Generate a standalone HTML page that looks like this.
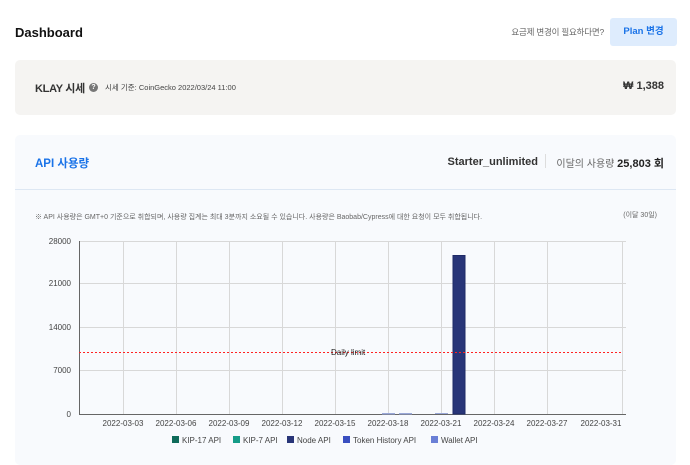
<!DOCTYPE html>
<html><head><meta charset="utf-8"><style>
*{margin:0;padding:0;box-sizing:border-box}
body{width:690px;height:457px;background:#fff;font-family:"Liberation Sans","Noto Sans CJK KR",sans-serif;position:relative;overflow:hidden;color:#222}
.a{position:absolute;white-space:nowrap}
.r{position:absolute;white-space:nowrap;text-align:right}
</style></head><body>
<div class="a" style="left:15px;top:25px;font-size:13px;font-weight:bold;color:#111">Dashboard</div>
<div class="r" style="right:86px;top:26px;font-size:8.5px;color:#666;letter-spacing:-0.2px">요금제 변경이 필요하다면?</div>
<div class="a" style="left:610px;top:18px;width:67px;height:28px;background:#deecfd;border-radius:3px;color:#1a73e8;font-size:9.5px;font-weight:bold;text-align:center;line-height:28px">Plan 변경</div>

<div class="a" style="left:15px;top:60px;width:661px;height:55px;background:#f5f4f2;border-radius:5px"></div>
<div class="a" style="left:35px;top:80px;font-size:11px;font-weight:bold;color:#333;letter-spacing:-0.3px">KLAY 시세</div>
<div class="a" style="left:89px;top:83px;width:9px;height:9px;border-radius:50%;background:#777;color:#fff;font-size:7px;text-align:center;line-height:9px;font-weight:bold">?</div>
<div class="a" style="left:105px;top:82px;font-size:7.5px;color:#444">시세 기준: CoinGecko 2022/03/24 11:00</div>
<div class="r" style="right:26px;top:80px;font-size:11px;font-weight:bold;color:#333">₩ 1,388</div>

<div class="a" style="left:15px;top:135px;width:661px;height:330px;background:#f8fafd;border-radius:5px"></div>
<div class="a" style="left:15px;top:189px;width:661px;height:1px;background:#dde7f3"></div>
<div class="a" style="left:35px;top:155px;font-size:11.5px;font-weight:bold;color:#1a73e8">API 사용량</div>
<div class="r" style="right:152px;top:156px;font-size:11px;font-weight:bold;color:#333">Starter_unlimited</div>
<div class="a" style="left:545px;top:154px;width:1px;height:14px;background:#ddd"></div>
<div class="r" style="right:26px;top:155px;font-size:10px;color:#666">이달의 사용량 <b style="color:#222;font-size:11px">25,803 회</b></div>
<div class="a" style="left:35px;top:212px;font-size:7px;color:#666">※ API 사용량은 GMT+0 기준으로 취합되며, 사용량 집계는 최대 3분까지 소요될 수 있습니다. 사용량은 Baobab/Cypress에 대한 요청이 모두 취합됩니다.</div>
<div class="r" style="right:33px;top:210px;font-size:7px;color:#666">(이달 30일)</div>

<svg class="a" style="left:0;top:0" width="690" height="457">
<g stroke="#d8d8d8" stroke-width="1">
<line x1="79" y1="241.5" x2="626" y2="241.5"/><line x1="79" y1="283.5" x2="626" y2="283.5"/><line x1="79" y1="327.5" x2="626" y2="327.5"/><line x1="79" y1="370.5" x2="626" y2="370.5"/>
<line x1="123.5" y1="241" x2="123.5" y2="414"/><line x1="176.5" y1="241" x2="176.5" y2="414"/><line x1="229.5" y1="241" x2="229.5" y2="414"/><line x1="282.5" y1="241" x2="282.5" y2="414"/><line x1="335.5" y1="241" x2="335.5" y2="414"/><line x1="388.5" y1="241" x2="388.5" y2="414"/><line x1="441.5" y1="241" x2="441.5" y2="414"/><line x1="494.5" y1="241" x2="494.5" y2="414"/><line x1="547.5" y1="241" x2="547.5" y2="414"/><line x1="622.5" y1="241" x2="622.5" y2="414"/>
</g>
<line x1="79.5" y1="241" x2="79.5" y2="414" stroke="#666"/>
<line x1="79" y1="414.5" x2="626" y2="414.5" stroke="#666"/>
<rect x="382" y="413" width="13" height="1.5" fill="#9aa8d8"/><rect x="399" y="413" width="13" height="1.5" fill="#9aa8d8"/><rect x="435" y="413" width="13" height="1" fill="#9aa8d8"/>
<rect x="453" y="255.5" width="12" height="158.5" fill="#283578" stroke="#1e2a66"/>
<line x1="79" y1="352.5" x2="622" y2="352.5" stroke="#f22" stroke-dasharray="2,2"/>
<text x="331" y="355" font-size="8" fill="#222" font-family="Liberation Sans">Daily limit</text>
<g font-size="8" fill="#444" font-family="Liberation Sans" text-anchor="end">
<text x="71" y="244">28000</text><text x="71" y="286">21000</text><text x="71" y="330">14000</text><text x="71" y="373">7000</text><text x="71" y="417">0</text>
</g>
<g font-size="8" fill="#444" font-family="Liberation Sans" text-anchor="middle">
<text x="123" y="426">2022-03-03</text><text x="176" y="426">2022-03-06</text><text x="229" y="426">2022-03-09</text><text x="282" y="426">2022-03-12</text><text x="335" y="426">2022-03-15</text><text x="388" y="426">2022-03-18</text><text x="441" y="426">2022-03-21</text><text x="494" y="426">2022-03-24</text><text x="547" y="426">2022-03-27</text><text x="601" y="426">2022-03-31</text>
</g>
<g font-size="8" fill="#444" font-family="Liberation Sans">
<rect x="172" y="436" width="7" height="7" fill="#0f6b5a"/><text x="182" y="443">KIP-17 API</text>
<rect x="233" y="436" width="7" height="7" fill="#169c88"/><text x="243" y="443">KIP-7 API</text>
<rect x="287" y="436" width="7" height="7" fill="#283578"/><text x="297" y="443">Node API</text>
<rect x="343" y="436" width="7" height="7" fill="#3a4fc0"/><text x="353" y="443">Token History API</text>
<rect x="431" y="436" width="7" height="7" fill="#6a7fd6"/><text x="441" y="443">Wallet API</text>
</g>
</svg>
</body></html>
